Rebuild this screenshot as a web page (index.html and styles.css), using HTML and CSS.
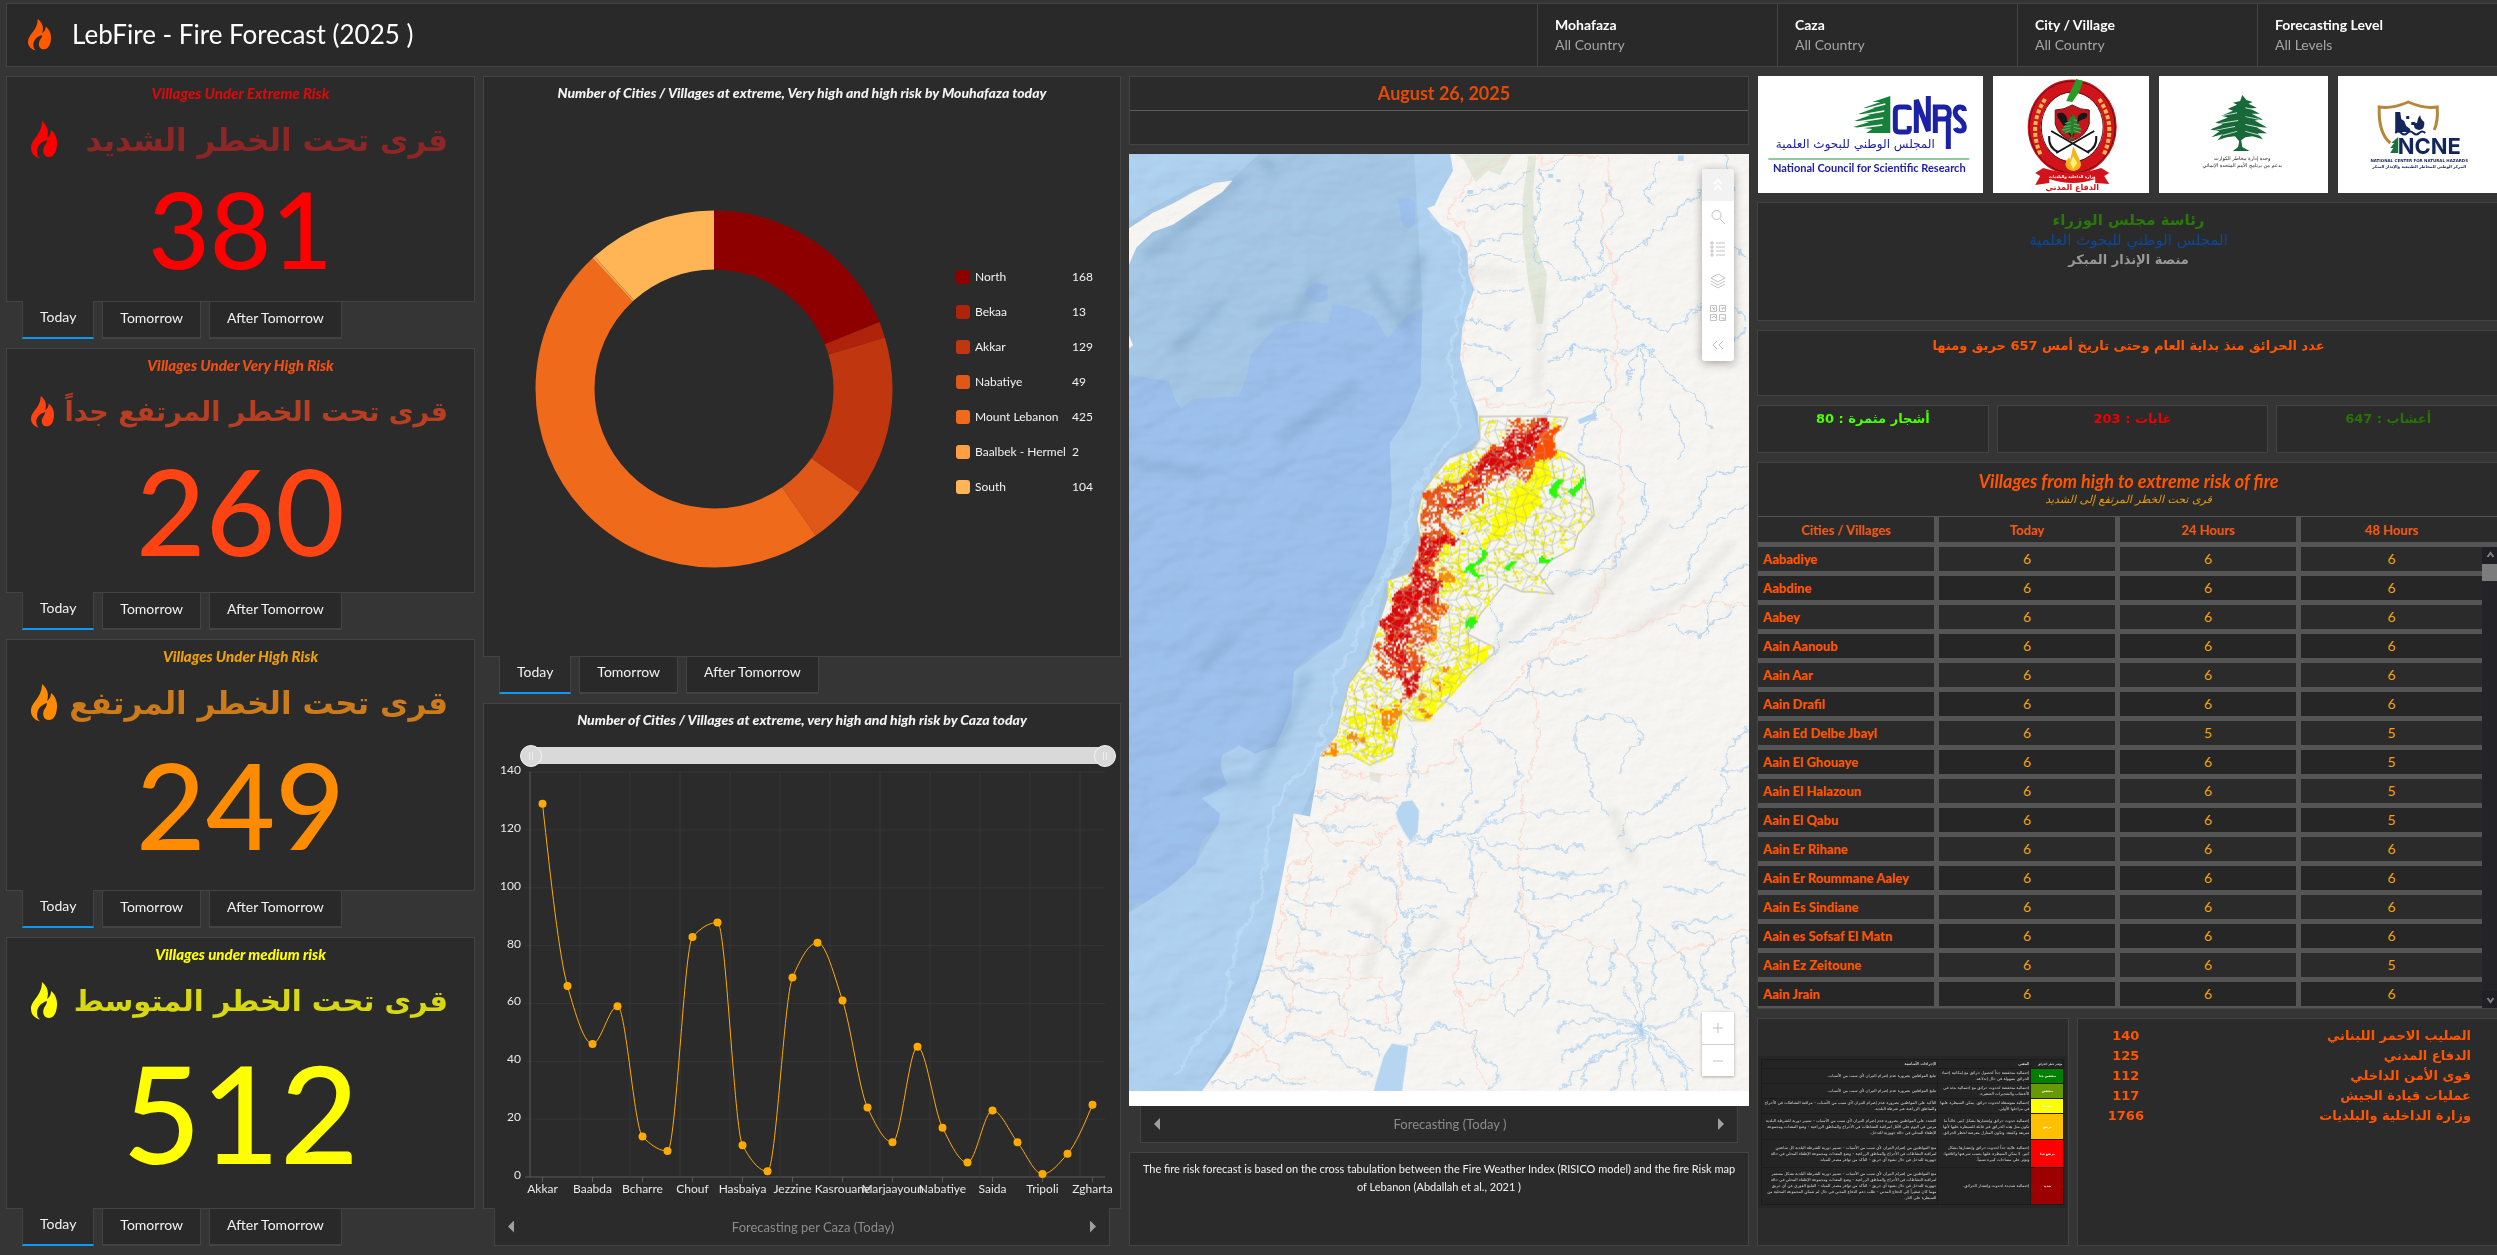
FILE: index.html
```html
<!DOCTYPE html>
<html lang="en">
<head>
<meta charset="utf-8">
<title>LebFire - Fire Forecast</title>
<link rel="stylesheet" href="styles.css">
</head>
<body>
<svg class="defs" width="0" height="0" aria-hidden="true">
  <symbol id="flame" viewBox="0 0 26 38" preserveAspectRatio="none"><path fill="currentColor" d="M11 0C17 5 18 11 16 17 19 15 20 12 20 9 24 12 26 17 26 22 26 30 23 36 18 36 13 36 11 31 13 26 14 24 16 22 16 19 10 21 6 25 6 31 6 34 7 36 9 37.500 3 36 0 32 0 27 0 18 11 14 11 0Z"/></symbol>
  <symbol id="cedar" viewBox="0 0 60 58" preserveAspectRatio="none"><path fill="currentColor" d="M31 0l4 5 6 2-4 2 8 4-6 1 9 5-8 0 11 6-8 1 12 7-10 0 10 6-9 0 5 6-10-3-7 1-4 3 1 7 7 4H22l5-4 1-6-4-5-8 1-9 3 5-6-11 3 8-6-9-2 12-5-7-2 12-5-6-2 11-5-5-2 9-4-4-2 7-2z"/><path stroke="#fff" stroke-width="1" fill="none" opacity=".8" d="M12 21l14-3M34 13l9 2M9 29l18-3M34 22l14 3M4 36l20-4M34 30l19 4M12 41l14-4M34 37l18 5"/></symbol>
</svg>

<header class="topbar">
  <svg class="brand-icon" aria-hidden="true"><use href="#flame"/></svg>
  <h1>LebFire - Fire Forecast (2025 )</h1>
  <nav class="filters">
    <button type="button"><b>Mohafaza</b><span>All Country</span></button>
    <button type="button"><b>Caza</b><span>All Country</span></button>
    <button type="button"><b>City / Village</b><span>All Country</span></button>
    <button type="button"><b>Forecasting Level</b><span>All Levels</span></button>
  </nav>
</header>

<main class="board">
  <div class="col">
    <section class="block block-1 extreme">
      <div class="card kpi"><h2>Villages Under Extreme Risk</h2>
        <div class="kpi-label"><svg aria-hidden="true"><use href="#flame"/></svg><p lang="ar" dir="rtl">قرى تحت الخطر الشديد</p></div>
        <strong>381</strong></div>
      <div class="tabs"><button type="button" class="on">Today</button><button type="button">Tomorrow</button><button type="button">After Tomorrow</button></div>
    </section>
    <section class="block block-2 very-high">
      <div class="card kpi"><h2>Villages Under Very High Risk</h2>
        <div class="kpi-label"><svg aria-hidden="true"><use href="#flame"/></svg><p lang="ar" dir="rtl">قرى تحت الخطر المرتفع جداً</p></div>
        <strong>260</strong></div>
      <div class="tabs"><button type="button" class="on">Today</button><button type="button">Tomorrow</button><button type="button">After Tomorrow</button></div>
    </section>
    <section class="block block-3 high">
      <div class="card kpi"><h2>Villages Under High Risk</h2>
        <div class="kpi-label"><svg aria-hidden="true"><use href="#flame"/></svg><p lang="ar" dir="rtl">قرى تحت الخطر المرتفع</p></div>
        <strong>249</strong></div>
      <div class="tabs"><button type="button" class="on">Today</button><button type="button">Tomorrow</button><button type="button">After Tomorrow</button></div>
    </section>
    <section class="block block-4 medium">
      <div class="card kpi"><h2>Villages under medium risk</h2>
        <div class="kpi-label"><svg aria-hidden="true"><use href="#flame"/></svg><p lang="ar" dir="rtl">قرى تحت الخطر المتوسط</p></div>
        <strong>512</strong></div>
      <div class="tabs"><button type="button" class="on">Today</button><button type="button">Tomorrow</button><button type="button">After Tomorrow</button></div>
    </section>
  </div>

  <div class="col">
    <section class="block block-pie">
      <div class="card pie">
        <h2>Number of Cities / Villages at extreme, Very high and high risk by Mouhafaza today</h2>
        <div class="pie-body">
          <svg class="donut" viewBox="0 0 358 358" role="img" aria-label="Villages at risk by Mouhafaza">
            <g fill="none" stroke-width="59" transform="rotate(-90 179 179)">
              <circle pathLength="890" cx="179" cy="179" r="149" stroke="#8e0000" stroke-dasharray="168 890"/>
              <circle pathLength="890" cx="179" cy="179" r="149" stroke="#ae230a" stroke-dasharray="13 890" stroke-dashoffset="-168"/>
              <circle pathLength="890" cx="179" cy="179" r="149" stroke="#bf360f" stroke-dasharray="129 890" stroke-dashoffset="-181"/>
              <circle pathLength="890" cx="179" cy="179" r="149" stroke="#e05818" stroke-dasharray="49 890" stroke-dashoffset="-310"/>
              <circle pathLength="890" cx="179" cy="179" r="149" stroke="#f06a1c" stroke-dasharray="425 890" stroke-dashoffset="-359"/>
              <circle pathLength="890" cx="179" cy="179" r="149" stroke="#ff9e42" stroke-dasharray="2 890" stroke-dashoffset="-784"/>
              <circle pathLength="890" cx="179" cy="179" r="149" stroke="#ffb556" stroke-dasharray="104 890" stroke-dashoffset="-786"/>
            </g>
          </svg>
          <ul class="legend">
            <li><i class="s1"></i><span>North</span><b>168</b></li>
            <li><i class="s2"></i><span>Bekaa</span><b>13</b></li>
            <li><i class="s3"></i><span>Akkar</span><b>129</b></li>
            <li><i class="s4"></i><span>Nabatiye</span><b>49</b></li>
            <li><i class="s5"></i><span>Mount Lebanon</span><b>425</b></li>
            <li><i class="s6"></i><span>Baalbek - Hermel</span><b>2</b></li>
            <li><i class="s7"></i><span>South</span><b>104</b></li>
          </ul>
        </div>
      </div>
      <div class="tabs"><button type="button" class="on">Today</button><button type="button">Tomorrow</button><button type="button">After Tomorrow</button></div>
    </section>
    <section class="block block-line">
      <div class="card line">
        <h2>Number of Cities / Villages at extreme, very high and high risk by Caza today</h2>
        <div class="range">
          <div class="range-bar"></div>
          <input type="range" aria-label="First Caza" min="0" max="22" value="0">
          <input type="range" aria-label="Last Caza" min="0" max="22" value="22">
        </div>
        <svg id="caza-chart" role="img" aria-label="Villages at risk by Caza"></svg>
      </div>
      <div class="pager"><button type="button" class="prev" aria-label="Previous"></button><span>Forecasting per Caza (Today)</span><button type="button" class="next" aria-label="Next"></button></div>
    </section>
  </div>

  <div class="col">
    <section class="card date"><h2>August 26, 2025</h2><p></p></section>
    <section class="block block-map">
      <div class="map">
        <svg class="terrain" viewBox="22 246 1517 2448" preserveAspectRatio="none" role="img" aria-label="Fire risk map of Lebanon">
          <defs>
            <filter id="relief" x="0" y="0" width="100%" height="100%"><feTurbulence type="fractalNoise" baseFrequency=".022 .03" numOctaves="5" seed="8"/><feDiffuseLighting surfaceScale="4" lighting-color="#fff"><feDistantLight azimuth="225" elevation="60"/></feDiffuseLighting></filter>
            <filter id="seabed" x="0" y="0" width="100%" height="100%"><feTurbulence type="fractalNoise" baseFrequency=".008 .013" numOctaves="3" seed="5"/><feDiffuseLighting surfaceScale="9" lighting-color="#fff"><feDistantLight azimuth="225" elevation="60"/></feDiffuseLighting></filter>
            <filter id="soft"><feGaussianBlur stdDeviation="12"/></filter>
            <filter id="winding" x="0" y="0" width="100%" height="100%"><feTurbulence type="fractalNoise" baseFrequency=".03" numOctaves="4" seed="3"/><feDisplacementMap in="SourceGraphic" scale="38" xChannelSelector="R" yChannelSelector="G"/></filter>
            <path id="land-shape" d="M808 246L815 290 785 345 770 380 752 388 785 432 830 460 850 500 853 560 866 600 850 650 838 700 832 780 850 850 875 920 880 990 860 1020 805 1040 770 1085 740 1130 725 1200 735 1250 710 1340 655 1360 655 1400 640 1450 620 1510 608 1560 560 1629 540 1711 530 1762 490 1813 480 1885 465 1977 425 1969 415 2039 390 2172 370 2275 340 2398 300 2510 270 2592 200 2695H1539V246ZM22 440L80 400 130 375 180 345 230 322 275 315 250 345 200 380 130 430 80 450 40 490 22 535ZM22 720L32 745 22 755Z"/>
            <clipPath id="land-clip"><use href="#land-shape"/></clipPath>
          </defs>
          <rect x="22" y="246" width="1517" height="2449" fill="#a8cbea"/>
          <path fill="#b2d5f4" d="M22 246H340L270 315 180 330 80 385 22 425ZM720 246H815V420L853 500 866 640 850 850 880 990 805 1040 740 1130 725 1230 650 1370 600 1560 530 1762 480 1885 415 2039 370 2275 300 2510 200 2695H22V2228L60 2203 190 2090 245 1987 200 1929 255 1895 245 1823 290 1793 380 1793 418 1700 425 1598 540 1510 620 1350 650 1270 660 1000 700 940 735 850 740 648Z"/>
          <path fill="#9fc3f0" d="M22 823L120 840 135 890 150 910 180 885 290 880 310 830 320 770 380 700 430 682 510 688 520 640 560 645 620 668 655 728 700 670 740 646 735 850 700 940 660 1000 665 1150 650 1270 620 1350 570 1420 540 1510 460 1560 425 1598 418 1700 380 1793 330 1813 290 1790 250 1815 245 1845 262 1895 200 1929 245 1970 240 2000 200 2040 185 2100 120 2162 60 2203 40 2200 22 2228ZM680 370Q690 350 722 370V430Q700 450 690 425ZM455 600Q480 575 508 590V630Q470 640 455 615Z"/>
          <path fill="none" stroke="#7fa3c9" stroke-width="22" opacity=".45" filter="url(#soft)" d="M390 1000L490 910 580 855M740 500L700 700 655 640 610 560M300 310L150 440 60 520M480 570L440 660 330 690M22 1050L200 1080M200 1900L330 1880 400 1750 460 1600M250 640L130 760M340 260L380 290M280 1500L200 1590"/>
          <rect x="22" y="246" width="860" height="2449" filter="url(#seabed)" opacity=".38" style="mix-blend-mode:multiply"/>
          <path fill="none" stroke="#c3dff7" stroke-width="8" opacity=".6" filter="url(#winding)" d="M765 400L825 480 845 600 808 760 815 850 830 960 775 1040 725 1120 700 1240 650 1350 600 1430 585 1510 530 1600 500 1760 470 1830 405 1900 365 2000 350 2170 290 2290 250 2490 130 2650"/>
          <use href="#land-shape" fill="#f7f6f1"/>
          <g clip-path="url(#land-clip)">
            <path fill="#dfe6d6" opacity=".8" d="M820 246H960L930 300 900 290 870 320 840 260ZM1000 250H1018L1010 350 1015 480 1045 560 1035 690 1020 690 1000 590 985 460 985 360ZM610 1860L640 1865 635 1890 612 1880Z"/>
            <path fill="none" stroke="#cfcec7" stroke-width="14" opacity=".5" filter="url(#soft)" d="M1030 600L1020 880M1200 1130L1120 1330 1000 1450 900 1560 860 1620M1340 1200L1220 1330 1130 1440M1500 1260L1380 1400 1240 1500M560 2200L640 2250 600 2400M800 2250L700 2400M1200 1950L1260 2100M830 560L970 560"/>
            <rect x="22" y="246" width="1517" height="2449" filter="url(#relief)" opacity=".2" style="mix-blend-mode:multiply"/>
            <g class="roads" filter="url(#winding)">
              <path d="M1000 246L1040 270 1110 250 1180 260M960 250L860 310 825 360 795 415 840 430 860 500 868 620 845 680 835 790 860 880 900 900 1010 905 1180 890 1210 850 1213 700 1205 520 1170 430 1200 330 1190 246M1180 900L1220 950 1225 1100 1230 1200 1205 1310 1150 1440 1060 1530 1030 1590M1060 1530L1240 1500 1330 1450 1440 1415 1539 1425M880 930L900 960 870 1010"/>
              <g transform="translate(0 1516) scale(1 1.025)"><path d="M1000 60L830 260 810 310 690 350 560 340 490 320M1000 60L1025 240 990 380 975 560 990 700 1000 780 960 870 860 930 820 880 840 720 890 590M990 705L1120 760 1285 825 1539 735M1060 0L1000 60M480 390L680 400 560 410 490 470 530 520 630 510 680 470M425 445L480 540 410 580 400 690 380 810 480 790 560 810 640 790 690 650 680 500M470 550L450 740 420 830 425 920 400 1000 330 1040 260 1080M560 810L550 1000 430 1010M510 700L530 640 630 520V470M350 820L430 870 640 860 650 980 690 950M820 890L860 1010 880 1100 910 1150M300 1000L380 1080 400 1110 490 1130"/></g>
            </g>
            <g class="rivers" filter="url(#winding)">
              <path d="M1090 246L1060 290 1030 280 1020 400 1010 500 1055 550 1090 570 1160 565 1180 550 1215 520 1290 470 1360 400 1430 340 1450 280M1000 290L940 330 900 340 850 350 830 380M1000 380L920 380 850 400M980 450L900 470 855 480M980 530L900 510 855 540M985 600L900 610 866 600M970 680L920 710 880 670 845 700M960 780L900 750 840 740M985 810L930 860 890 830 850 850M1180 585L1260 670 1340 712 1420 640 1500 640 1530 685M1180 585L1110 650 1060 700 1025 760M1280 740L1230 765 1110 750 1050 780M1280 740L1250 790 1240 860M1280 740L1285 850 1270 940M1280 740L1340 820 1380 860 1420 900 1450 970M1190 760L1195 860 1165 930 1130 970 1130 1030 1170 1040M1120 320L1130 400 1110 480 1160 560M1080 440L1120 410M1190 320L1230 400 1190 460 1170 560M1320 270L1290 350 1300 390M1480 250L1500 330 1460 400 1500 480 1539 520M1460 720L1480 760 1530 700M1110 750L1090 790M1040 850L1060 880 1040 930M1170 1040L1240 1060 1280 1110 1290 1200 1240 1250 1200 1330 1090 1340M1340 900L1380 980 1370 1050M1539 1060L1440 1090 1400 1200 1360 1220 1340 1210M1539 1160L1460 1200 1400 1290 1380 1370 1300 1380M1230 1270L1140 1350 1060 1340 1030 1360M1150 1440L1100 1460 1000 1500 960 1530M1539 1310L1480 1360 1440 1430 1440 1500M1340 1480L1420 1500 1500 1430M910 1420L930 1480 920 1560"/>
              <g transform="translate(0 1516) scale(1 1.025)"><path d="M1140 40L1080 65 1020 45 990 100M1130 130L1060 140 970 130 900 180 830 180 790 155M1220 340L1240 290 1270 250 1270 220 1200 190 1120 205 1110 270 1150 310 1160 410 1190 450M1539 220L1500 260 1465 330 1539 330M1390 350L1300 430 1240 450 1220 520M1150 440L990 440 900 470 850 495 740 500 700 520M1539 420L1490 450 1380 490 1240 530M850 510L940 575 1000 590 1100 600 1200 590M850 500L860 560 865 650 830 700M860 505L1000 530 1140 530M980 600L1000 650 1100 660 1200 630M980 640L970 690 1040 760 1120 720 1190 660 1240 620M1470 340L1490 380 1420 480 1430 560 1530 600M700 220L720 270 710 350 700 400M710 270L730 360M830 260L860 350 840 440 790 480 730 520M880 220L960 280 980 350 930 430 860 490M580 560L640 600 680 620 690 700 780 680M580 320L490 325M480 400L600 405 640 400 680 430M430 460L540 480 620 475M690 540L700 600 780 610 820 650M700 740L720 700 780 705M410 620L500 605M400 650L460 680 540 670M410 690L450 740 490 750M560 745L620 755 680 810 720 800 700 760M350 840L400 840 470 830 430 820M400 840L440 890 520 900 560 940M320 940L330 910 360 900 430 940 490 950M690 840L730 790 830 790 860 760 900 820 980 810M690 850L680 900 600 920M700 740L690 840 680 900 685 1000M1000 720L1040 770 1010 810 1060 870 1040 930M820 870L920 880 910 840M1260 660L1275 730 1250 800 1270 900 1280 990M1210 760L1200 860 1180 890M1150 780L1145 860 1170 890M1300 740L1310 850 1280 990M1300 730L1370 800 1410 880 1400 960M1350 720L1450 760 1420 830 1440 900 1500 940M1539 760L1500 760 1500 850 1460 900M1480 620L1430 640 1330 630M1539 960L1500 900M1280 990L1200 960 1120 930 1070 920M1280 990L1180 970 1090 975 1070 1000M1280 990L1170 1010 1090 1050 1080 1080M1280 990L1220 1030 1120 1100 1080 1140M1280 990L1240 1050 1200 1150M1280 990L1260 1060 1255 1150M1280 990L1300 1060 1340 1150M1280 990L1340 1030 1400 1110M1280 990L1350 980 1420 920M1280 990L1240 920 1230 890M1270 1010L1160 1060 1120 1150M1290 1010L1370 1080 1390 1150M320 960L400 1030 430 1010 500 1020 560 1090 620 1110M220 1120L280 1140 330 1110 450 1140M700 1040L730 1010 780 980 800 990 870 1000 870 1070M640 1060L590 1010 560 1010M560 960L610 980 680 1000M1040 870L960 960 930 900M880 1040L930 1120 900 1150M780 1130L850 1120M1500 700L1400 720 1350 710"/></g>
            </g>
          </g>
          <g fill="#b5d5f0"><path d="M1120 940L1165 920 1165 935 1125 952ZM1420 220h10v10h-10ZM1365 250h14v14h-14ZM850 340h14v10h-14ZM920 855h16v12h-16ZM1048 298h12v10h-12ZM1068 312h10v8h-10Z"/>
            <g transform="translate(0 1516) scale(1 1.025)"><path d="M675 440L690 412 715 408 732 435 728 490 710 512 695 490 680 460ZM665 1028L705 1035 690 1150H620L645 1060ZM842 328h12v8h-12ZM868 408h9v8h-9ZM786 415h6v8h-6ZM895 460h7v7h-7ZM545 560h9v7h-9Z"/></g></g>
          <g id="risk-cells"></g>
        </svg>
        <div class="map-tools">
          <button type="button" class="fold" aria-label="Collapse"><svg viewBox="0 0 16 16"><path d="M4 7l4-4 4 4M4 13l4-4 4 4"/></svg></button>
          <button type="button" aria-label="Search"><svg viewBox="0 0 16 16"><circle cx="6.500" cy="6" r="4.500"/><path d="M10 10l5 5"/></svg></button>
          <button type="button" aria-label="Legend"><svg viewBox="0 0 16 16"><path d="M6 2h9M6 6h9M6 10h9M6 14h9M1 1h2v2H1zM1 5h2v2H1zM1 9h2v2H1zM1 13h2v2H1z"/></svg></button>
          <button type="button" aria-label="Layers"><svg viewBox="0 0 16 16"><path d="M8 1l7 4-7 4-7-4zM1 8l7 4 7-4M1 11l7 4 7-4"/></svg></button>
          <button type="button" aria-label="Basemaps"><svg viewBox="0 0 16 16"><path d="M.5.500h6v6h-6zM9.500.500h6v6h-6zM.5 9.500h6v6h-6zM9.500 9.500h6v6h-6zM2 2l3 3M3 5l2-3M11 3h4M12 5l2-3M2 13l2-2 2 2M11 13h3v2"/></svg></button>
          <button type="button" aria-label="Expand tools"><svg viewBox="0 0 16 16"><path d="M7 4L3 8l4 4M13 4L9 8l4 4"/></svg></button>
        </div>
        <div class="zoom-tools">
          <button type="button" aria-label="Zoom in"><svg viewBox="0 0 16 16"><path d="M8 3v10M3 8h10"/></svg></button>
          <button type="button" aria-label="Zoom out"><svg viewBox="0 0 16 16"><path d="M3 8h10"/></svg></button>
        </div>
      </div>
      <div class="pager"><button type="button" class="prev" aria-label="Previous"></button><span>Forecasting (Today )</span><button type="button" class="next" aria-label="Next"></button></div>
    </section>
    <section class="card note"><p>The fire risk forecast is based on the cross tabulation between the Fire Weather Index (RISICO model) and the fire Risk map of Lebanon (Abdallah et al., 2021 )</p></section>
  </div>

  <div class="col right">
    <section class="logos">
      <svg viewBox="0 0 224 117" role="img" aria-label="CNRS">
        <path fill="#17803a" d="M132 20L114 26 122 26 105 32 116 32 100 38 112 39 96 45 111 46 95 51 114 53 108 57H132Z"/>
        <path stroke="#fff" stroke-width="1.500" d="M107 33l20-5M103 39l23-4M99 46l26-4M100 52l24-3"/>
        <path fill="none" stroke="#1c22a8" stroke-width="5" d="M151 34V33Q151 31 148 31H141Q137 31 137 35V52Q137 56 141 56H148Q151 56 151 53V50M158 57V24L170 55V20M177 57V31H186Q191 31 191 37T186 43H179M190 43V73M206 35Q206 31 202 31T197 35 201 43 206 51 202 55 197 52"/>
        <text x="97" y="72" text-anchor="middle" class="logo-ar" direction="rtl">المجلس الوطني للبحوث العلمية</text>
        <path d="M10 83H211" stroke="#239040" stroke-width="1"/>
        <text x="111" y="96" text-anchor="middle" class="logo-en">National Council for Scientific Research</text>
      </svg>
      <svg viewBox="0 0 156 117" role="img" aria-label="Civil Defense">
        <ellipse cx="79" cy="51" rx="38" ry="41" fill="none" stroke="#d3131b" stroke-width="13"/><ellipse cx="79" cy="51" rx="43" ry="46" fill="none" stroke="#5b1010"/><ellipse cx="79" cy="51" rx="31" ry="35" fill="none" stroke="#5b1010"/>
        <path d="M52 23Q34 50 48 80M106 23Q124 50 110 80" stroke="#eab956" stroke-width="4" stroke-dasharray="4 2" fill="none"/>
        <path d="M83 3l7 2-4 11-7 10-6-1 4-9z" fill="#2a9b28"/>
        <path d="M62 34q9 0 17-5 8 5 17 5v14q-3 12-17 17-14-5-17-17z" fill="#c5161d" stroke="#641212"/>
        <path d="M65 42q-4-6 5-5l3 3 6 21 6-21 3-3q9-1 5 5l-7 3-7 18z" fill="#171717"/>
        <path d="M58 55l38 22M101 55L63 77M56 60q-1 12 9 16M103 60q1 12-9 16" stroke="#171717" stroke-width="2" fill="none"/>
        <svg x="67" y="38" width="24" height="26" color="#26822a"><use href="#cedar"/></svg>
        <path d="M80 70l7 15q3 8-7 10-10-2-7-10l3-4 1 3z" fill="#f8b51b"/><path d="M80 80l4 7-4 6-3-6z" fill="#fff17b"/>
        <path d="M50 92q29 9 58 0l8 5-5 3 5 8-14-1v-4q-22 8-46 0v4l-14 2 5-9-5-3z" fill="#d3131b"/>
        <text x="79" y="102" text-anchor="middle" class="tiny white" direction="rtl">وزارة الداخلية والبلديات</text>
        <text x="79" y="114" text-anchor="middle" class="badge-ar" direction="rtl">الدفاع المدني</text>
      </svg>
      <svg viewBox="0 0 168 117" role="img" aria-label="Disaster Risk Management Unit">
        <svg x="51" y="19" width="62" height="57" color="#17693a"><use href="#cedar"/></svg>
        <text x="83" y="84" text-anchor="middle" class="unit-ar" direction="rtl">وحدة إدارة مخاطر الكوارث</text>
        <text x="83" y="91" text-anchor="middle" class="unit-ar" direction="rtl">بدعم من برنامج الأمم المتحدة الإنمائي</text>
      </svg>
      <svg viewBox="0 0 162 117" role="img" aria-label="NCNE">
        <path d="M52 67Q40 57 41 31 54 33 70 26 86 33 99 31 100 45 96 54" fill="none" stroke="#b5873a" stroke-width="3"/>
        <path d="M57 36h5l1 7 3 2 2 5 4 3v3H57ZM68 40h3v3h-3zM73 46h3v3h-3zM82 39q0 4 4 7 1 7-5 8-7-1-5-8 3 2 3 0 0-4 3-7z" fill="#13265c"/>
        <path d="M57 57q3-3 6 0t6 0 6 0 6 0 6 0" fill="none" stroke="#13265c" stroke-width="2"/>
        <path d="M60 61l-7 6 3 0-4 5 3 0-3 5h8z" fill="#18743b"/>
        <text x="91" y="78" text-anchor="middle" class="ncne">NCNE</text>
        <text x="81" y="86" text-anchor="middle" class="tiny navy">NATIONAL CENTER FOR NATURAL HAZARDS</text>
        <text x="81" y="92" text-anchor="middle" class="tiny navy" direction="rtl">المركز الوطني للمخاطر الطبيعية والإنذار المبكر</text>
      </svg>
    </section>
    <section class="card office" lang="ar" dir="rtl"><p class="gov">رئاسة مجلس الوزراء</p><p class="council">المجلس الوطني للبحوث العلمية</p><p class="platform">منصة الإنذار المبكر</p></section>
    <section class="card total" lang="ar" dir="rtl"><p>عدد الحرائق منذ بداية العام وحتى تاريخ أمس 657 حريق ومنها</p></section>
    <section class="kinds" lang="ar">
      <p class="card trees" dir="rtl">أشجار مثمرة : 80</p><p class="card forest" dir="rtl">غابات : 203</p><p class="card grass" dir="rtl">أعشاب : 647</p>
    </section>
    <section class="card villages">
      <h2>Villages from high to extreme risk of fire</h2>
      <p lang="ar" dir="rtl">قرى تحت الخطر المرتفع إلى الشديد</p>
      <div class="list">
        <table>
          <thead><tr><th>Cities / Villages</th><th>Today</th><th>24 Hours</th><th>48 Hours</th></tr></thead>
          <tbody>
            <tr><th>Aabadiye</th><td>6</td><td>6</td><td>6</td></tr>
            <tr><th>Aabdine</th><td>6</td><td>6</td><td>6</td></tr>
            <tr><th>Aabey</th><td>6</td><td>6</td><td>6</td></tr>
            <tr><th>Aain Aanoub</th><td>6</td><td>6</td><td>6</td></tr>
            <tr><th>Aain Aar</th><td>6</td><td>6</td><td>6</td></tr>
            <tr><th>Aain Drafil</th><td>6</td><td>6</td><td>6</td></tr>
            <tr><th>Aain Ed Delbe Jbayl</th><td>6</td><td>5</td><td>5</td></tr>
            <tr><th>Aain El Ghouaye</th><td>6</td><td>6</td><td>5</td></tr>
            <tr><th>Aain El Halazoun</th><td>6</td><td>6</td><td>5</td></tr>
            <tr><th>Aain El Qabu</th><td>6</td><td>6</td><td>5</td></tr>
            <tr><th>Aain Er Rihane</th><td>6</td><td>6</td><td>6</td></tr>
            <tr><th>Aain Er Roummane Aaley</th><td>6</td><td>6</td><td>6</td></tr>
            <tr><th>Aain Es Sindiane</th><td>6</td><td>6</td><td>6</td></tr>
            <tr><th>Aain es Sofsaf El Matn</th><td>6</td><td>6</td><td>6</td></tr>
            <tr><th>Aain Ez Zeitoune</th><td>6</td><td>6</td><td>5</td></tr>
            <tr><th>Aain Jrain</th><td>6</td><td>6</td><td>6</td></tr>
          </tbody>
        </table>
        <div class="scroll" aria-hidden="true"><svg viewBox="0 0 16 17"><path d="M5 10l3-4 3 4"/></svg><i></i><svg class="down" viewBox="0 0 16 17"><path d="M5 7l3 4 3-4"/></svg></div>
      </div>
    </section>
    <section class="bottom">
      <div class="card guide">
        <table lang="ar" dir="rtl">
          <tr><th>مؤشر خطر الحرائق</th><th>المعنى</th><th>الإجراءات الأساسية</th></tr>
          <tr class="g2"><th class="l1">منخفض جدا</th><td>إحتمالية منخفضة جداً لحصول حرائق مع إمكانية إخماد الحرائق بسهولة في حال إندلاعه.</td><td>تبليغ المواطنين بضرورة عدم إضرام النيران لأي سبب من الأسباب.</td></tr>
          <tr class="g2"><th class="l2">منخفض</th><td>إحتمالية منخفضة لحدوث حرائق مع إحتمالية بدئه في الأعشاب والشجيرات الصغيرة.</td><td>تبليغ المواطنين بضرورة عدم إضرام النيران لأي سبب من الأسباب.</td></tr>
          <tr class="g2"><th class="l3">متوسط</th><td>إحتمالية متوسطة لحدوث حرائق. يمكن السيطرة عليها في مراحلها الأولى.</td><td>التأكيد على المواطنين بضرورة عدم إضرام النيران لأي سبب من الأسباب – مراقبة النشاطات في الأحراج والمناطق الزراعية عبر شرطة البلدية.</td></tr>
          <tr class="g4"><th class="l4">مرتفع</th><td>إحتمالية حدوث حرائق وإنتشارها بشكل كبير. غالباً ما تكون مثل هذه الحرائق غير قابلة للسيطرة عليها لأنها سريعة وكثيفة. وتكون المنازل معرضة لخطر الحرائق.</td><td>التشدد على المواطنين بضرورة عدم إضرام النيران لأي سبب من الأسباب – تسيير دورية للشرطة البلدية مرتين في اليوم على الأقل لمراقبة النشاطات في الأحراج والمناطق الزراعية – وضع المعدات ومجموعة الإطفاء المحلي في حالة جهوزية للتدخل.</td></tr>
          <tr class="g5"><th class="l5">مرتفع جدا</th><td>إحتمالية عالية جداً لحدوث حرائق وإنتشارها بشكل كبير. لا يمكن السيطرة عليها بسبب سرعتها وكثافتها، وتؤثر على مساحات كبيرة نسبياً.</td><td>منع المواطنين من إضرام النيران لأي سبب من الأسباب – تسيير دورية للشرطة البلدية كل ساعتين لمراقبة النشاطات في الأحراج والمناطق الزراعية – وضع المعدات ومجموعة الإطفاء المحلي في حالة جهوزية للتدخل في حال نشوء أي حريق – التأكد من توافر مصدر للمياه.</td></tr>
          <tr class="g6"><th class="l6">شديد</th><td>إحتمالية شديدة لحدوث وإنتشار الحرائق.</td><td>منع المواطنين من إضرام النيران لأي سبب من الأسباب – تسيير دورية للشرطة البلدية بشكل مستمر لمراقبة النشاطات في الأحراج والمناطق الزراعية – وضع المعدات ومجموعة الإطفاء المحلي في حالة جهوزية للتدخل في حال نشوء أي حريق – التأكد من توافر مصدر للمياه – التبليغ الفوري عن أي حريق مهما كان صغيراً إلى الدفاع المدني – طلب دعم الدفاع المدني في حال لم تتمكن المجموعة المحلية من السيطرة على النار.</td></tr>
        </table>
      </div>
      <dl class="card phones" lang="ar" dir="rtl">
        <div><dt>الصليب الاحمر اللبناني</dt><dd>140</dd></div>
        <div><dt>الدفاع المدني</dt><dd>125</dd></div>
        <div><dt>قوى الأمن الداخلي</dt><dd>112</dd></div>
        <div><dt>عمليات قيادة الجيش</dt><dd>117</dd></div>
        <div><dt>وزارة الداخلية والبلديات</dt><dd>1766</dd></div>
      </dl>
    </section>
  </div>
</main>
<script src="script.js"></script>
</body>
</html>
```
FILE: styles.css
```css
* { box-sizing: border-box; }
body { margin: 0; min-height: 100vh; display: flex; flex-direction: column; gap: 9px; padding: 3px 0 9px 6px; background: #353535; color: #f2f2f2; font: 14px/20px Lato, "DejaVu Sans", sans-serif; overflow-x: hidden; }
.defs { position: absolute; }
h1, h2, p, ul, dl, dd { margin: 0; padding: 0; }
button { font: inherit; color: inherit; background: none; border: 0; padding: 0; }
.card { background: #2b2b2b; border: 1px solid #434343; }

.topbar { display: flex; align-items: center; height: 64px; background: #292929; border: 1px solid #434343; border-right: 0; padding-left: 21px; }
.brand-icon { width: 23px; height: 32px; color: #ff5a00; }
.topbar h1 { margin-left: 21px; padding-bottom: 2px; font-size: 26px; line-height: 32px; font-weight: 400; color: #fff; }
.filters { display: flex; align-self: stretch; margin-left: auto; }
.filters button { width: 240px; padding: 0 17px; border-left: 1px solid #434343; text-align: left; display: flex; flex-direction: column; justify-content: center; }
.filters b { color: #fff; }
.filters span { color: #a5a5a5; }

.board { flex: 1; display: grid; grid-template-columns: 469fr 638fr 620fr 743fr; gap: 8px; margin-right: -3px; }
.col { display: flex; flex-direction: column; gap: 9px; min-width: 0; }
.block { display: flex; flex-direction: column; min-height: 0; }
.block > .card, .block > .map { flex: 1; min-height: 0; }
.block-1 { flex: 263 1 0; }
.block-2 { flex: 282 1 0; }
.block-3 { flex: 289 1 0; }
.block-4 { flex: 309 1 0; }
.block-pie { flex: 617 1 0; }
.block-line { flex: 543 1 0; }
.block-map { flex: 1 1 0; }

.tabs { display: flex; gap: 8px; padding-left: 16px; }
.tabs button { height: 37px; padding: 0 17px 4px; font-size: 14px; line-height: 20px; background: #292929; border: 1px solid #434343; border-top: 0; border-bottom-width: 2px; }
.tabs .on { background: #2b2b2b; margin-top: -1px; height: 38px; border-bottom-color: #0d99f2; }

.kpi { display: flex; flex-direction: column; text-align: center; padding-bottom: 18px; }
.card h2 { font-size: 15px; line-height: 20px; font-weight: 900; font-style: italic; }
.kpi h2 { padding-top: 6px; }
.kpi-label { display: flex; align-items: center; justify-content: space-between; height: 70px; padding: 4px 26px 0 24px; }
.kpi-label svg { width: 26px; height: 38px; flex: none; }
.kpi-label p { font: bold 31px/48px "DejaVu Sans", sans-serif; white-space: nowrap; }
.kpi strong { flex: 1; display: flex; align-items: center; justify-content: center; font-weight: 500; line-height: 100px; font-size: 120px; }
.extreme .kpi { color: #f00; }
.extreme h2 { color: #d60b0b; }
.extreme .kpi p { color: #8e2626; }
.extreme strong { font-size: 106px; }
.very-high .kpi { color: #ff4312; }
.very-high h2 { color: #f25010; }
.very-high p { color: #b83e22; }
.very-high .kpi-label p { font-size: 27px; }
.very-high .kpi-label svg { width: 23px; height: 32px; }
.high .kpi { color: #ff8c00; }
.high h2 { color: #eda00c; }
.high p { color: #cc7a1a; }
.medium .kpi { color: #ff0; }
.medium p { color: #d8d812; }
.medium .kpi-label p { font-size: 29px; }
.medium strong { font-size: 136px; }

.pie, .line { display: flex; flex-direction: column; }
.pie h2, .line h2 { padding-top: 6px; text-align: center; font-size: 14px; }
.pie-body { flex: 1; display: flex; align-items: center; justify-content: space-between; padding: 20px 24px 0 51px; }
.donut { width: 358px; flex: 0 1 auto; }
.legend { list-style: none; display: flex; flex-direction: column; gap: 15px; font-size: 12px; margin-bottom: 14px; }
.legend li { display: grid; grid-template-columns: 14px 92px 24px; align-items: center; column-gap: 5px; }
.legend b { font-weight: 400; }
.legend i { height: 14px; border-radius: 3px; }
.s1 { background: #8e0000; } .s2 { background: #ae230a; } .s3 { background: #bf360f; } .s4 { background: #e05818; } .s5 { background: #f06a1c; } .s6 { background: #ff9e42; } .s7 { background: #ffb556; }

.range { display: grid; align-items: center; margin: 15px 4px 0 36px; height: 22px; }
.range > * { grid-area: 1 / 1; }
.range-bar { height: 17px; margin: 0 10px; background: #d9d9d9; }
.range input { appearance: none; width: 100%; margin: 0; background: none; pointer-events: none; }
.range input::-webkit-slider-thumb { appearance: none; pointer-events: auto; width: 22px; height: 22px; border-radius: 50%; border: 1px solid #f2f2f2; background: linear-gradient(90deg, transparent 8px, #eee 8px, #eee 9px, transparent 9px, transparent 11px, #eee 11px, #eee 12px, transparent 12px) no-repeat center / 20px 8px #d9d9d9; }
#caza-chart { flex: 1; width: 100%; min-height: 0; display: block; overflow: visible; font-size: 12px; }
#caza-chart text { fill: #e8e8e8; }

.pager { display: flex; align-items: center; justify-content: space-between; height: 37px; margin: 0 11px; padding: 0 13px; background: #2b2b2b; border: 1px solid #434343; border-top: 0; color: #8b8b8b; font-size: 13px; }
.pager span { padding-left: 22px; }
.block-line .pager { margin-top: -1px; height: 38px; }
.pager button { width: 6px; height: 12px; background: #a0a0a0; }
.prev { clip-path: polygon(100% 0, 0 50%, 100% 100%); }
.next { clip-path: polygon(0 0, 100% 50%, 0 100%); }

.date { height: 69px; text-align: center; }
.date h2 { height: 34px; padding-left: 10px; font-size: 18px; line-height: 33px; font-style: normal; font-weight: 700; color: #e34a05; border-bottom: 1px solid #5c5c5c; }
.map { position: relative; background: #fff; padding-bottom: 15px; }
.terrain { position: absolute; inset: 0; width: 100%; height: calc(100% - 15px); }
.roads path { fill: none; stroke: #fbd5c9; stroke-width: 3; }
.rivers path { fill: none; stroke: #aacdee; stroke-width: 3; }
.map-tools, .zoom-tools { position: absolute; right: 15px; width: 32px; background: #fff; box-shadow: 0 2px 10px rgba(0, 0, 0, .35); display: flex; flex-direction: column; }
.map-tools { top: 15px; border-radius: 3px; overflow: hidden; }
.zoom-tools { bottom: 30px; box-shadow: 0 1px 3px rgba(0, 0, 0, .3); }
.map button { height: 32px; display: grid; place-items: center; }
.map button svg { width: 16px; height: 16px; fill: none; stroke: #c2c2c2; }
.map .fold { background: #f2f2f2; }
.map .fold svg { stroke: #fff; stroke-width: 2; }
.zoom-tools button + button { border-top: 1px solid #d0d0d0; }
.note { height: 94px; padding: 7px 5px; text-align: center; font-size: 11px; line-height: 18px; }
.note p { max-width: 600px; margin: 0 auto; }

.logos { display: grid; grid-template-columns: 224fr 156fr 168fr 162fr; gap: 10px; height: 117px; padding-left: 1px; }
.logos > svg { width: 100%; height: 117px; background: #fff; }
.logo-ar { font: 12px "DejaVu Sans", sans-serif; fill: #1c22a8; }
.logo-en { font: bold 11px Lato, sans-serif; fill: #1c22a8; }
.ncne { font: bold 22px Inter, sans-serif; fill: #13265c; }
.unit-ar { font: 5px "DejaVu Sans", sans-serif; fill: #222; }
.badge-ar { font: bold 8px "DejaVu Sans", sans-serif; fill: #d3131b; }
.tiny { font: bold 4px "DejaVu Sans", sans-serif; }
.white { fill: #fff; }
.navy { fill: #13265c; }
.office { flex: 119 1 0; text-align: center; padding-top: 7px; font: 15px/20px "DejaVu Sans", sans-serif; }
.office .gov { color: #277a08; font-weight: bold; }
.office .council { color: #0b489c; }
.office .platform { color: #999; font-weight: bold; font-size: 13px; }
.total { flex: 63 1 0; text-align: center; padding-top: 5px; color: #ff5500; font: bold 13px/20px "DejaVu Sans", sans-serif; }
.kinds { flex: 52 1 0; display: grid; grid-template-columns: 232fr 272fr 224fr; gap: 8px; text-align: center; font: bold 13px/20px "DejaVu Sans", sans-serif; }
.kinds p { padding-top: 3px; }
.trees { color: #4cff00; } .forest { color: #f00000; } .grass { color: #267300; }
.villages { height: 547px; text-align: center; overflow: hidden; }
.villages h2 { padding-top: 8px; font-size: 18px; font-weight: 700; color: #ff5500; }
.villages p { font: italic 11px/18px "DejaVu Sans", sans-serif; color: #e69b0a; }
.list { position: relative; margin-top: 7px; border-top: 1px solid #555; background: #2b2b2b; }
.list table { width: calc(100% - 17px); border-collapse: separate; border-spacing: 0; table-layout: fixed; }
.list th, .list td { height: 29px; padding: 0; line-height: 20px; border: 0 solid #555; border-width: 0 5px 5px 0; }
.list tr > :last-child { border-right: 0; }
.list thead th { height: 30px; font-size: 13px; color: #f25a12; }
.list td { color: #efa30c; }
.list tbody th { text-align: left; padding-left: 5px; font-size: 13px; font-weight: 900; color: #ff5500; }
.list tbody tr:nth-child(even) { background: #262626; }
.scroll { position: absolute; right: 0; top: 25px; height: 466px; width: 17px; border-top: 5px solid #555; background: #242428; display: flex; flex-direction: column; }
.scroll svg { height: 17px; fill: none; stroke: #808080; stroke-width: 2; background: #1f1f25; }
.scroll i { height: 17px; background: #7c7c7c; }
.scroll .down { margin-top: auto; }
.bottom { height: 228px; display: grid; grid-template-columns: 311fr 422fr; gap: 8px; }
.guide { display: flex; align-items: center; justify-content: center; overflow: hidden; }
.guide table { width: 303px; table-layout: fixed; border-collapse: collapse; background: #242424; outline: 3px solid #262626; font: 4px/6px "DejaVu Sans", sans-serif; color: #ddd; }
.guide th, .guide td { padding: 0 1px; border: 1px solid #1c1c1c; text-align: right; font-weight: normal; }
.guide tr:first-child { height: 9px; color: #fff; }
.guide tr > :first-child { width: 33px; font-size: 3px; }
.guide tr > :nth-child(2) { width: 93px; }
.guide .g2 { height: 15px; } .guide .g4 { height: 26px; } .guide .g5 { height: 28px; } .guide .g6 { height: 37px; }
.guide tr + tr th { text-align: center; font-weight: bold; color: #fff; }
.l1 { background: #008000; } .l2 { background: #669a00; } .l3 { background: #ff0; } .l4 { background: #ffc000; } .l5 { background: #f00; } .l6 { background: #9c0000; }
.phones { padding: 7px 28px; font: bold 13px/20px "DejaVu Sans", sans-serif; color: #ff5500; }
.phones div { display: flex; justify-content: space-between; }
.phones dd { width: 40px; text-align: center; }
```
FILE: script.js
```js
const NS = 'http://www.w3.org/2000/svg';
const add = (parent, tag, attrs, text) => {
  const el = document.createElementNS(NS, tag);
  for (const k in attrs) el.setAttribute(k, attrs[k]);
  if (text !== undefined) el.textContent = text;
  parent.appendChild(el);
  return el;
};

// Line chart: villages at risk per Caza
const values = [129, 66, 46, 59, 14, 9, 83, 88, 11, 2, 69, 81, 61, 24, 12, 45, 17, 5, 23, 12, 1, 8, 25];
const names = ['Akkar', 'Baabda', 'Bcharre', 'Chouf', 'Hasbaiya', 'Jezzine', 'Kasrouane', 'Marjaayoun', 'Nabatiye', 'Saida', 'Tripoli', 'Zgharta'];
function drawChart() {
  const svg = document.getElementById('caza-chart');
  svg.replaceChildren();
  const w = svg.clientWidth, h = svg.clientHeight;
  const left = 46, right = w - 15, top = 5, bottom = h - 31;
  const step = (right - left) / values.length;
  const y = v => bottom - v / 140 * (bottom - top);
  for (let v = 0; v <= 140; v += 20) {
    add(svg, 'line', { x1: left - 5, x2: right, y1: y(v), y2: y(v), stroke: v ? '#363636' : '#5c5c5c' });
    add(svg, 'text', { x: left - 9, y: y(v) + 2, 'text-anchor': 'end' }, v);
  }
  for (let i = 0; i <= values.length; i += 2)
    add(svg, 'line', { x1: left + i * step, x2: left + i * step, y1: top, y2: bottom, stroke: i ? '#363636' : '#5c5c5c' });
  names.forEach((n, i) => {
    const x = left + (i * 2 + .5) * step;
    add(svg, 'line', { x1: x, x2: x, y1: bottom, y2: bottom + 5, stroke: '#5c5c5c' });
    add(svg, 'text', { x, y: bottom + 16, 'text-anchor': 'middle' }, n);
  });
  const p = values.map((v, i) => [left + (i + .5) * step, y(v)]);
  const slope = p.map((q, i) => {
    if (!i || i === p.length - 1) return null;
    const a = (q[1] - p[i - 1][1]) / step, b = (p[i + 1][1] - q[1]) / step;
    return a * b <= 0 ? 0 : 2 * a * b / (a + b);
  });
  slope[0] = 1.5 * (p[1][1] - p[0][1]) / step - slope[1] / 2;
  const n = p.length - 1;
  slope[n] = 1.5 * (p[n][1] - p[n - 1][1]) / step - slope[n - 1] / 2;
  let d = `M${p[0]}`;
  for (let i = 0; i < n; i++)
    d += `C${p[i][0] + step / 3},${p[i][1] + slope[i] * step / 3} ${p[i + 1][0] - step / 3},${p[i + 1][1] - slope[i + 1] * step / 3} ${p[i + 1]}`;
  add(svg, 'path', { d, fill: 'none', stroke: '#ffaa00' });
  p.forEach(q => add(svg, 'circle', { cx: q[0], cy: q[1], r: 4, fill: '#ffaa00' }));
}
drawChart();
addEventListener('resize', drawChart);

let seed = 7;
const rnd = () => (seed = (seed * 16807) % 2147483647) / 2147483647;
const poly = s => s.split(' ').map(t => t.split(',').map(Number));
const inside = (x, y, pts) => {
  let c = false;
  for (let i = 0, j = pts.length - 1; i < pts.length; j = i++) {
    const [xi, yi] = pts[i], [xj, yj] = pts[j];
    if (yi > y !== yj > y && x < (xj - xi) * (y - yi) / (yj - yi) + xi) c = !c;
  }
  return c;
};
const country = poly('880,932 1035,930 1095,935 1085,960 1065,975 1060,1015 1100,1030 1135,1060 1140,1120 1155,1150 1160,1190 1120,1240 1110,1275 1050,1310 1025,1345 1060,1395 1020,1390 985,1390 940,1370 910,1410 880,1450 850,1500 915,1535 915,1550 860,1598 800,1670 750,1726 710,1726 690,1700 665,1818 610,1842 560,1813 490,1818 530,1762 540,1711 560,1629 608,1560 620,1510 640,1450 655,1400 655,1360 710,1340 735,1250 725,1200 740,1130 770,1085 805,1040 860,1020 880,990');
const zones = [
  ['#dc0808', .78, ['1040,925 1030,1000 985,1040 985,1060 930,1085 890,1075 840,1150 785,1185 790,1165 850,1110 880,1040 930,1000 960,970 1000,965', '740,1240 790,1248 830,1235 830,1260 780,1275 760,1290 750,1330 782,1370 760,1410 720,1440 700,1500 700,1570 670,1590 655,1550 640,1470 660,1420 700,1370 720,1310 735,1270', '735,1598 740,1620 700,1660 690,1640 680,1588']],
  ['#ff4e00', .97, ['1045,955 1070,965 1055,1030 1010,1068 990,1040 1030,1000']],
  ['#22ff00', 1, ['1058,1100 1078,1102 1076,1150 1056,1140', '1098,1120 1125,1095 1135,1125 1110,1130', '885,1260 893,1290 870,1320 888,1340 845,1345', '1018,1295 1048,1295 1030,1318 1015,1318', '945,1315 968,1318 958,1335', '860,1450 885,1455 870,1485 845,1490']],
  ['#f04f10', .66, ['945,935 1035,930 1060,1030 985,1095 930,1085 890,1130 850,1190 790,1190 790,1230 830,1240 820,1260 770,1290 780,1380 790,1450 760,1480 740,1560 735,1600 710,1660 690,1690 680,1610 620,1600 625,1540 650,1450 700,1350 725,1290 740,1200 740,1130 850,1080 880,1030 940,990']],
  ['#ff8a00', .75, ['790,1330 825,1340 790,1370 770,1360', '760,1430 800,1420 760,1510 735,1500', '620,1690 690,1690 660,1745 640,1730', '540,1770 590,1760 580,1800', '515,1780 538,1800 535,1822 490,1816', '765,1605 790,1640 770,1650', '780,1590 805,1590 800,1615', '725,1660 750,1660 745,1690', '725,1700 755,1700 735,1725']],
  ['#ffff00', .97, ['1055,1018 1050,1060 1030,1140 1000,1190 940,1230 905,1270 885,1280 900,1230 950,1150 990,1090', '1055,1020 1100,1035 1070,1050', '870,1520 912,1535 900,1560 860,1560', '795,1620 860,1560 800,1650 750,1726 712,1724 740,1700']],
  ['#f7f700', .5, ['800,1045 880,1025 870,1090 820,1140 780,1110', '850,1190 960,1080 900,1220 830,1210', '740,1290 830,1260 850,1350 780,1420', '890,1420 930,1390 850,1490', '860,1520 915,1540 880,1600 800,1660 700,1724 730,1640', '540,1700 690,1670 670,1820 600,1842 495,1815']],
  ['#f2f21c', .16, ['480,900 1200,900 1200,1850 480,1850']]
].map(z => [z[0], z[1], z[2].map(poly)]);
const layer = document.getElementById('risk-cells');
add(layer, 'path', { d: 'M' + country.join('L') + 'Z', fill: '#f6f6f1', stroke: '#bdbdb8', 'stroke-width': 3 });
const paths = {};
const size = 5;
for (let y = 925; y < 1845; y += size)
  for (let x = 485; x < 1165; x += size) {
    const u = x + Math.sin(y / 11) * 9, v = y + Math.cos(x / 9) * 9;
    if (!inside(x, y, country)) continue;
    for (const [color, chance, shapes] of zones) {
      if (!shapes.some(s => inside(u, v, s))) continue;
      const patch = Math.sin(x / 13 + Math.sin(y / 17) * 3) * Math.cos(y / 14 + Math.sin(x / 19) * 3) * .4;
      if (rnd() < chance + (chance < .8 ? patch : 0)) { paths[color] = (paths[color] || '') + `M${x} ${y}h${size}v${size}h-${size}z`; break; }
      if (color === '#22ff00') break;
    }
  }
for (const c in paths) add(layer, 'path', { d: paths[c], fill: c });
// Village boundaries
let mesh = '';
const node = (i, j) => [485 + i * 23 + Math.sin(i * 12.9 + j * 78.2) * 9, 925 + j * 24 + Math.cos(i * 39.3 + j * 11.1) * 9];
for (let j = 0; j < 38; j++)
  for (let i = 0; i < 30; i++) {
    const a = node(i, j), b = node(i + 1, j), c = node(i, j + 1);
    if (!inside(...a, country)) continue;
    if (inside(...b, country)) mesh += `M${a}L${b}`;
    if (inside(...c, country)) mesh += `M${a}L${c}`;
  }
add(layer, 'path', { d: mesh, fill: 'none', stroke: '#a8a8a0', 'stroke-width': 2, opacity: .65 });
```
